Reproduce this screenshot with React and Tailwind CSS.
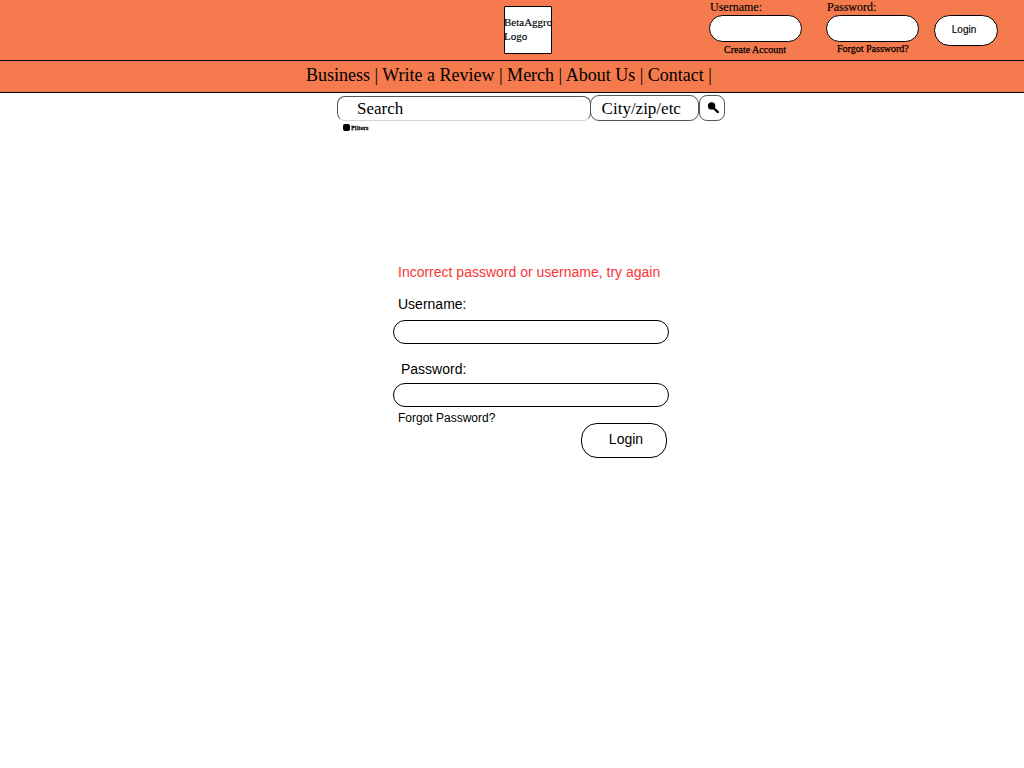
const serif = "font-['Liberation_Serif',serif]";
const sans = "font-['Liberation_Sans',sans-serif]";

function Header() {
  return (
    <header className="flex h-[61px] items-start border-b border-black bg-[#f57a4d]">
      <div className="ml-[504px] mt-[6px] h-[48px] w-[48px] rounded-[1px] border border-black bg-white">
        <p className="-ml-px mt-[8px] text-[11px] leading-[14px] [-webkit-text-stroke:0.15px_black]">
          BetaAggro
          <br />
          Logo
        </p>
      </div>
      <div className="ml-[157px] w-[93px]">
        <label htmlFor="top-user" className="ml-px block h-[15px] text-[12px] leading-[14px] [-webkit-text-stroke:0.15px_black]">Username:</label>
        <input id="top-user" className="block h-[27px] w-full rounded-full border border-black bg-white px-3 text-xs outline-none" />
        <a className="ml-[15px] mt-[2px] block whitespace-nowrap text-[10px] leading-[12px] [-webkit-text-stroke:0.25px_black]">Create Account</a>
      </div>
      <div className="ml-[24px] w-[93px]">
        <label htmlFor="top-pass" className="ml-px block h-[15px] text-[12px] leading-[14px] [-webkit-text-stroke:0.15px_black]">Password:</label>
        <input id="top-pass" type="password" className="block h-[27px] w-full rounded-full border border-black bg-white px-3 text-xs outline-none" />
        <a className="ml-[11px] mt-px block whitespace-nowrap text-[10px] leading-[12px] [-webkit-text-stroke:0.25px_black]">Forgot Password?</a>
      </div>
      <button className={`${sans} ml-[15px] mt-[15px] h-[31px] w-[64px] rounded-full border border-black bg-white pr-[4px] pb-[2px] text-[10px] [-webkit-text-stroke:0.15px_black]`}>
        Login
      </button>
    </header>
  );
}

function Nav() {
  return (
    <nav className="h-[32px] whitespace-nowrap border-b border-black bg-[#f57a4d] pl-[306px] text-[18px] leading-[29px]">
      Business | Write a Review | Merch | About Us | Contact |
    </nav>
  );
}

function SearchBar() {
  return (
    <section className="pl-[337px] pt-[2px]">
      <div className="flex items-end text-[17px] leading-[24px]">
        <div className="h-[25px] w-[254px] rounded-[8px] border border-[#55555b] border-b-[#d4d4d4] pl-[19px]">Search</div>
        <div className="-ml-px h-[26px] w-[109px] rounded-[9px] border border-[#55555b] pl-[10.6px] leading-[26px]">City/zip/etc</div>
        <button aria-label="Search" className="flex h-[26px] w-[26px] items-start rounded-[8px] border border-[#55555b] pl-[7px] pt-[5px]">
          <svg width="13" height="13" viewBox="0 0 13 13">
            <circle cx="4.6" cy="4.9" r="3.7" fill="black" />
            <path d="M5.5 6 L10.9 11.1" stroke="black" strokeWidth="2.2" strokeLinecap="round" />
          </svg>
        </button>
      </div>
      <div className="ml-[5.5px] mt-[2.5px] flex h-[8px] items-center gap-[1.5px] text-[7px] leading-[8px] [-webkit-text-stroke:0.3px_black]">
        <span className="h-[7px] w-[7px] rounded-[2px] bg-black" />
        <span className="tracking-[-0.06px]">Filters</span>
      </div>
    </section>
  );
}

function LoginForm() {
  return (
    <main className={`${sans} ml-[393px] mt-[132.5px] flex w-[276px] flex-col text-[14px] leading-[16px]`}>
      <p className="ml-[5px] whitespace-nowrap text-[#f93536]">Incorrect password or username, try again</p>
      <label htmlFor="user" className="ml-[5px] mt-[16px]">Username:</label>
      <input id="user" className="mt-[8px] h-[24px] w-full rounded-full border border-black px-3 outline-none" />
      <label htmlFor="pass" className="ml-[8px] mt-[17px]">Password:</label>
      <input id="pass" type="password" className="mt-[6px] h-[24px] w-full rounded-full border border-black px-3 outline-none" />
      <a className="ml-[5px] mt-[4px] h-[12px] text-[12px] leading-[14px]">Forgot Password?</a>
      <button className="mr-[2px] h-[35px] w-[86px] self-end rounded-[16px] border border-black pb-[4px] pl-[4px]">Login</button>
    </main>
  );
}

export default function App() {
  return (
    <div className={`${serif} h-screen w-[1024px] overflow-hidden bg-white text-black`}>
      <Header />
      <Nav />
      <SearchBar />
      <LoginForm />
    </div>
  );
}
